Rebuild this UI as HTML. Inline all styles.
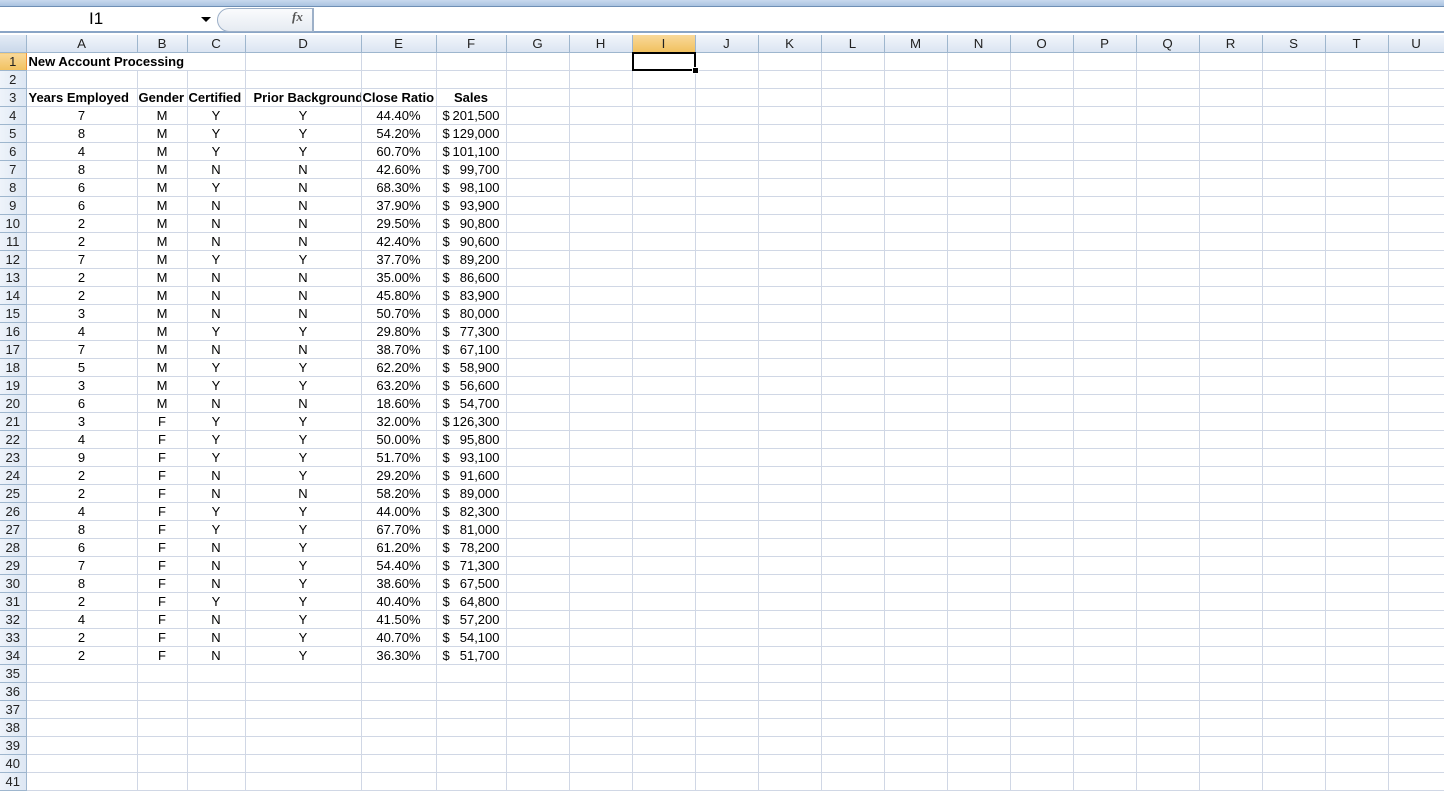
<!DOCTYPE html>
<html><head><meta charset="utf-8"><style>
body{margin:0;width:1444px;height:777px;overflow:hidden;background:#fff;font-family:"Liberation Sans",Arial,sans-serif;position:relative}
.strip{position:absolute;left:0;top:0;width:1444px;height:6px;background:linear-gradient(#c9d9ee,#aac3e0);border-bottom:1px solid #6f8fb5}
.fb{position:absolute;left:0;top:7px;width:1444px;height:24px;background:#fff;border-bottom:2px solid #8aa5c6}
.nb{position:absolute;left:0;top:7px;width:200px;height:24px;font-size:17px;line-height:24px;text-indent:89px}
.arr{position:absolute;left:201px;top:17px;width:0;height:0;border-left:5px solid transparent;border-right:5px solid transparent;border-top:5px solid #000}
.pill{position:absolute;left:217px;top:8px;width:95px;height:22px;border:1px solid #9db0c8;border-radius:12px 0 0 12px;background:linear-gradient(#fafbfd,#e6ebf2)}
.fx{position:absolute;left:292px;top:9px;font:italic bold 13px "Liberation Serif",serif;color:#555}
.vl{position:absolute;left:312px;top:8px;width:1px;height:23px;background:#9db0c8}
table{position:absolute;left:0;top:35px;width:1444px;border-collapse:collapse;table-layout:fixed;font-size:13px}
td{height:17px;padding:0 2px;border-right:1px solid #d0d7e5;border-bottom:1px solid #d0d7e5;white-space:nowrap;overflow:hidden;line-height:17px}
tr.h td{background:linear-gradient(#f2f6fb,#dbe5f2);border-right:1px solid #9eb6ce;border-bottom:1px solid #9eb6ce;text-align:center;color:#222;font-size:13.3px}
td.r{background:linear-gradient(90deg,#eef3fa,#dde7f3);border-right:1px solid #9eb6ce;border-bottom:1px solid #9eb6ce;text-align:center;font-size:13px;color:#222;padding:0}
tr.h td.sel{background:linear-gradient(#f9d99b,#f1c15f);border-bottom:1px solid #f29436}
td.rs{background:linear-gradient(#f9d99b,#f1c15f)!important;border-right:1px solid #f29436!important}
.c{text-align:center}.p{text-align:right;padding-right:15px}
b{font-weight:bold}
.s{display:flex;justify-content:space-between;padding:0 4px 0 4px}
.cur{position:absolute;left:632px;top:52px;width:60px;height:15px;border:2px solid #000}
.cur:after{content:"";position:absolute;right:-5px;bottom:-5px;width:5px;height:5px;background:#000;border:1px solid #fff}
</style></head><body>
<div class="strip"></div>
<div class="fb"></div>
<div class="nb">I1</div><div class="arr"></div>
<div class="pill"></div><div class="fx">fx</div><div class="vl"></div>
<table>
<colgroup><col style="width:26px"><col style="width:111px"><col style="width:50px"><col style="width:58px"><col style="width:116px"><col style="width:75px"><col style="width:70px"><col style="width:63px"><col style="width:63px"><col style="width:63px"><col style="width:63px"><col style="width:63px"><col style="width:63px"><col style="width:63px"><col style="width:63px"><col style="width:63px"><col style="width:63px"><col style="width:63px"><col style="width:63px"><col style="width:63px"><col style="width:63px"><col style="width:56px"></colgroup>
<tr class="h"><td style="background:linear-gradient(#e4ecf6,#cad8ea)"></td><td>A</td><td>B</td><td>C</td><td>D</td><td>E</td><td>F</td><td>G</td><td>H</td><td class="sel">I</td><td>J</td><td>K</td><td>L</td><td>M</td><td>N</td><td>O</td><td>P</td><td>Q</td><td>R</td><td>S</td><td>T</td><td>U</td></tr>
<tr><td class="r rs">1</td><td colspan="3" style="overflow:visible"><b>New Account Processing</b></td><td></td><td></td><td></td><td></td><td></td><td></td><td></td><td></td><td></td><td></td><td></td><td></td><td></td><td></td><td></td><td></td><td></td><td></td></tr>
<tr><td class="r">2</td><td></td><td></td><td></td><td></td><td></td><td></td><td></td><td></td><td></td><td></td><td></td><td></td><td></td><td></td><td></td><td></td><td></td><td></td><td></td><td></td><td></td></tr>
<tr><td class="r">3</td><td><b>Years Employed</b></td><td style="padding:0 1px"><b>Gender</b></td><td style="padding:0 1px"><b>Certified</b></td><td style="padding-left:8px;padding-right:0;text-overflow:clip"><b>Prior Background</b></td><td style="padding-left:1px;padding-right:0"><b>Close Ratio</b></td><td class="c"><b>Sales</b></td><td></td><td></td><td></td><td></td><td></td><td></td><td></td><td></td><td></td><td></td><td></td><td></td><td></td><td></td><td></td></tr>
<tr><td class="r">4</td><td class="c">7</td><td class="c">M</td><td class="c">Y</td><td class="c">Y</td><td class="p">44.40%</td><td><div class="s"><span>$</span><span>201,500</span></div></td><td></td><td></td><td></td><td></td><td></td><td></td><td></td><td></td><td></td><td></td><td></td><td></td><td></td><td></td><td></td></tr>
<tr><td class="r">5</td><td class="c">8</td><td class="c">M</td><td class="c">Y</td><td class="c">Y</td><td class="p">54.20%</td><td><div class="s"><span>$</span><span>129,000</span></div></td><td></td><td></td><td></td><td></td><td></td><td></td><td></td><td></td><td></td><td></td><td></td><td></td><td></td><td></td><td></td></tr>
<tr><td class="r">6</td><td class="c">4</td><td class="c">M</td><td class="c">Y</td><td class="c">Y</td><td class="p">60.70%</td><td><div class="s"><span>$</span><span>101,100</span></div></td><td></td><td></td><td></td><td></td><td></td><td></td><td></td><td></td><td></td><td></td><td></td><td></td><td></td><td></td><td></td></tr>
<tr><td class="r">7</td><td class="c">8</td><td class="c">M</td><td class="c">N</td><td class="c">N</td><td class="p">42.60%</td><td><div class="s"><span>$</span><span>99,700</span></div></td><td></td><td></td><td></td><td></td><td></td><td></td><td></td><td></td><td></td><td></td><td></td><td></td><td></td><td></td><td></td></tr>
<tr><td class="r">8</td><td class="c">6</td><td class="c">M</td><td class="c">Y</td><td class="c">N</td><td class="p">68.30%</td><td><div class="s"><span>$</span><span>98,100</span></div></td><td></td><td></td><td></td><td></td><td></td><td></td><td></td><td></td><td></td><td></td><td></td><td></td><td></td><td></td><td></td></tr>
<tr><td class="r">9</td><td class="c">6</td><td class="c">M</td><td class="c">N</td><td class="c">N</td><td class="p">37.90%</td><td><div class="s"><span>$</span><span>93,900</span></div></td><td></td><td></td><td></td><td></td><td></td><td></td><td></td><td></td><td></td><td></td><td></td><td></td><td></td><td></td><td></td></tr>
<tr><td class="r">10</td><td class="c">2</td><td class="c">M</td><td class="c">N</td><td class="c">N</td><td class="p">29.50%</td><td><div class="s"><span>$</span><span>90,800</span></div></td><td></td><td></td><td></td><td></td><td></td><td></td><td></td><td></td><td></td><td></td><td></td><td></td><td></td><td></td><td></td></tr>
<tr><td class="r">11</td><td class="c">2</td><td class="c">M</td><td class="c">N</td><td class="c">N</td><td class="p">42.40%</td><td><div class="s"><span>$</span><span>90,600</span></div></td><td></td><td></td><td></td><td></td><td></td><td></td><td></td><td></td><td></td><td></td><td></td><td></td><td></td><td></td><td></td></tr>
<tr><td class="r">12</td><td class="c">7</td><td class="c">M</td><td class="c">Y</td><td class="c">Y</td><td class="p">37.70%</td><td><div class="s"><span>$</span><span>89,200</span></div></td><td></td><td></td><td></td><td></td><td></td><td></td><td></td><td></td><td></td><td></td><td></td><td></td><td></td><td></td><td></td></tr>
<tr><td class="r">13</td><td class="c">2</td><td class="c">M</td><td class="c">N</td><td class="c">N</td><td class="p">35.00%</td><td><div class="s"><span>$</span><span>86,600</span></div></td><td></td><td></td><td></td><td></td><td></td><td></td><td></td><td></td><td></td><td></td><td></td><td></td><td></td><td></td><td></td></tr>
<tr><td class="r">14</td><td class="c">2</td><td class="c">M</td><td class="c">N</td><td class="c">N</td><td class="p">45.80%</td><td><div class="s"><span>$</span><span>83,900</span></div></td><td></td><td></td><td></td><td></td><td></td><td></td><td></td><td></td><td></td><td></td><td></td><td></td><td></td><td></td><td></td></tr>
<tr><td class="r">15</td><td class="c">3</td><td class="c">M</td><td class="c">N</td><td class="c">N</td><td class="p">50.70%</td><td><div class="s"><span>$</span><span>80,000</span></div></td><td></td><td></td><td></td><td></td><td></td><td></td><td></td><td></td><td></td><td></td><td></td><td></td><td></td><td></td><td></td></tr>
<tr><td class="r">16</td><td class="c">4</td><td class="c">M</td><td class="c">Y</td><td class="c">Y</td><td class="p">29.80%</td><td><div class="s"><span>$</span><span>77,300</span></div></td><td></td><td></td><td></td><td></td><td></td><td></td><td></td><td></td><td></td><td></td><td></td><td></td><td></td><td></td><td></td></tr>
<tr><td class="r">17</td><td class="c">7</td><td class="c">M</td><td class="c">N</td><td class="c">N</td><td class="p">38.70%</td><td><div class="s"><span>$</span><span>67,100</span></div></td><td></td><td></td><td></td><td></td><td></td><td></td><td></td><td></td><td></td><td></td><td></td><td></td><td></td><td></td><td></td></tr>
<tr><td class="r">18</td><td class="c">5</td><td class="c">M</td><td class="c">Y</td><td class="c">Y</td><td class="p">62.20%</td><td><div class="s"><span>$</span><span>58,900</span></div></td><td></td><td></td><td></td><td></td><td></td><td></td><td></td><td></td><td></td><td></td><td></td><td></td><td></td><td></td><td></td></tr>
<tr><td class="r">19</td><td class="c">3</td><td class="c">M</td><td class="c">Y</td><td class="c">Y</td><td class="p">63.20%</td><td><div class="s"><span>$</span><span>56,600</span></div></td><td></td><td></td><td></td><td></td><td></td><td></td><td></td><td></td><td></td><td></td><td></td><td></td><td></td><td></td><td></td></tr>
<tr><td class="r">20</td><td class="c">6</td><td class="c">M</td><td class="c">N</td><td class="c">N</td><td class="p">18.60%</td><td><div class="s"><span>$</span><span>54,700</span></div></td><td></td><td></td><td></td><td></td><td></td><td></td><td></td><td></td><td></td><td></td><td></td><td></td><td></td><td></td><td></td></tr>
<tr><td class="r">21</td><td class="c">3</td><td class="c">F</td><td class="c">Y</td><td class="c">Y</td><td class="p">32.00%</td><td><div class="s"><span>$</span><span>126,300</span></div></td><td></td><td></td><td></td><td></td><td></td><td></td><td></td><td></td><td></td><td></td><td></td><td></td><td></td><td></td><td></td></tr>
<tr><td class="r">22</td><td class="c">4</td><td class="c">F</td><td class="c">Y</td><td class="c">Y</td><td class="p">50.00%</td><td><div class="s"><span>$</span><span>95,800</span></div></td><td></td><td></td><td></td><td></td><td></td><td></td><td></td><td></td><td></td><td></td><td></td><td></td><td></td><td></td><td></td></tr>
<tr><td class="r">23</td><td class="c">9</td><td class="c">F</td><td class="c">Y</td><td class="c">Y</td><td class="p">51.70%</td><td><div class="s"><span>$</span><span>93,100</span></div></td><td></td><td></td><td></td><td></td><td></td><td></td><td></td><td></td><td></td><td></td><td></td><td></td><td></td><td></td><td></td></tr>
<tr><td class="r">24</td><td class="c">2</td><td class="c">F</td><td class="c">N</td><td class="c">Y</td><td class="p">29.20%</td><td><div class="s"><span>$</span><span>91,600</span></div></td><td></td><td></td><td></td><td></td><td></td><td></td><td></td><td></td><td></td><td></td><td></td><td></td><td></td><td></td><td></td></tr>
<tr><td class="r">25</td><td class="c">2</td><td class="c">F</td><td class="c">N</td><td class="c">N</td><td class="p">58.20%</td><td><div class="s"><span>$</span><span>89,000</span></div></td><td></td><td></td><td></td><td></td><td></td><td></td><td></td><td></td><td></td><td></td><td></td><td></td><td></td><td></td><td></td></tr>
<tr><td class="r">26</td><td class="c">4</td><td class="c">F</td><td class="c">Y</td><td class="c">Y</td><td class="p">44.00%</td><td><div class="s"><span>$</span><span>82,300</span></div></td><td></td><td></td><td></td><td></td><td></td><td></td><td></td><td></td><td></td><td></td><td></td><td></td><td></td><td></td><td></td></tr>
<tr><td class="r">27</td><td class="c">8</td><td class="c">F</td><td class="c">Y</td><td class="c">Y</td><td class="p">67.70%</td><td><div class="s"><span>$</span><span>81,000</span></div></td><td></td><td></td><td></td><td></td><td></td><td></td><td></td><td></td><td></td><td></td><td></td><td></td><td></td><td></td><td></td></tr>
<tr><td class="r">28</td><td class="c">6</td><td class="c">F</td><td class="c">N</td><td class="c">Y</td><td class="p">61.20%</td><td><div class="s"><span>$</span><span>78,200</span></div></td><td></td><td></td><td></td><td></td><td></td><td></td><td></td><td></td><td></td><td></td><td></td><td></td><td></td><td></td><td></td></tr>
<tr><td class="r">29</td><td class="c">7</td><td class="c">F</td><td class="c">N</td><td class="c">Y</td><td class="p">54.40%</td><td><div class="s"><span>$</span><span>71,300</span></div></td><td></td><td></td><td></td><td></td><td></td><td></td><td></td><td></td><td></td><td></td><td></td><td></td><td></td><td></td><td></td></tr>
<tr><td class="r">30</td><td class="c">8</td><td class="c">F</td><td class="c">N</td><td class="c">Y</td><td class="p">38.60%</td><td><div class="s"><span>$</span><span>67,500</span></div></td><td></td><td></td><td></td><td></td><td></td><td></td><td></td><td></td><td></td><td></td><td></td><td></td><td></td><td></td><td></td></tr>
<tr><td class="r">31</td><td class="c">2</td><td class="c">F</td><td class="c">Y</td><td class="c">Y</td><td class="p">40.40%</td><td><div class="s"><span>$</span><span>64,800</span></div></td><td></td><td></td><td></td><td></td><td></td><td></td><td></td><td></td><td></td><td></td><td></td><td></td><td></td><td></td><td></td></tr>
<tr><td class="r">32</td><td class="c">4</td><td class="c">F</td><td class="c">N</td><td class="c">Y</td><td class="p">41.50%</td><td><div class="s"><span>$</span><span>57,200</span></div></td><td></td><td></td><td></td><td></td><td></td><td></td><td></td><td></td><td></td><td></td><td></td><td></td><td></td><td></td><td></td></tr>
<tr><td class="r">33</td><td class="c">2</td><td class="c">F</td><td class="c">N</td><td class="c">Y</td><td class="p">40.70%</td><td><div class="s"><span>$</span><span>54,100</span></div></td><td></td><td></td><td></td><td></td><td></td><td></td><td></td><td></td><td></td><td></td><td></td><td></td><td></td><td></td><td></td></tr>
<tr><td class="r">34</td><td class="c">2</td><td class="c">F</td><td class="c">N</td><td class="c">Y</td><td class="p">36.30%</td><td><div class="s"><span>$</span><span>51,700</span></div></td><td></td><td></td><td></td><td></td><td></td><td></td><td></td><td></td><td></td><td></td><td></td><td></td><td></td><td></td><td></td></tr>
<tr><td class="r">35</td><td></td><td></td><td></td><td></td><td></td><td></td><td></td><td></td><td></td><td></td><td></td><td></td><td></td><td></td><td></td><td></td><td></td><td></td><td></td><td></td><td></td></tr>
<tr><td class="r">36</td><td></td><td></td><td></td><td></td><td></td><td></td><td></td><td></td><td></td><td></td><td></td><td></td><td></td><td></td><td></td><td></td><td></td><td></td><td></td><td></td><td></td></tr>
<tr><td class="r">37</td><td></td><td></td><td></td><td></td><td></td><td></td><td></td><td></td><td></td><td></td><td></td><td></td><td></td><td></td><td></td><td></td><td></td><td></td><td></td><td></td><td></td></tr>
<tr><td class="r">38</td><td></td><td></td><td></td><td></td><td></td><td></td><td></td><td></td><td></td><td></td><td></td><td></td><td></td><td></td><td></td><td></td><td></td><td></td><td></td><td></td><td></td></tr>
<tr><td class="r">39</td><td></td><td></td><td></td><td></td><td></td><td></td><td></td><td></td><td></td><td></td><td></td><td></td><td></td><td></td><td></td><td></td><td></td><td></td><td></td><td></td><td></td></tr>
<tr><td class="r">40</td><td></td><td></td><td></td><td></td><td></td><td></td><td></td><td></td><td></td><td></td><td></td><td></td><td></td><td></td><td></td><td></td><td></td><td></td><td></td><td></td><td></td></tr>
<tr><td class="r">41</td><td></td><td></td><td></td><td></td><td></td><td></td><td></td><td></td><td></td><td></td><td></td><td></td><td></td><td></td><td></td><td></td><td></td><td></td><td></td><td></td><td></td></tr>
</table>
<div class="cur"></div>
</body></html>
